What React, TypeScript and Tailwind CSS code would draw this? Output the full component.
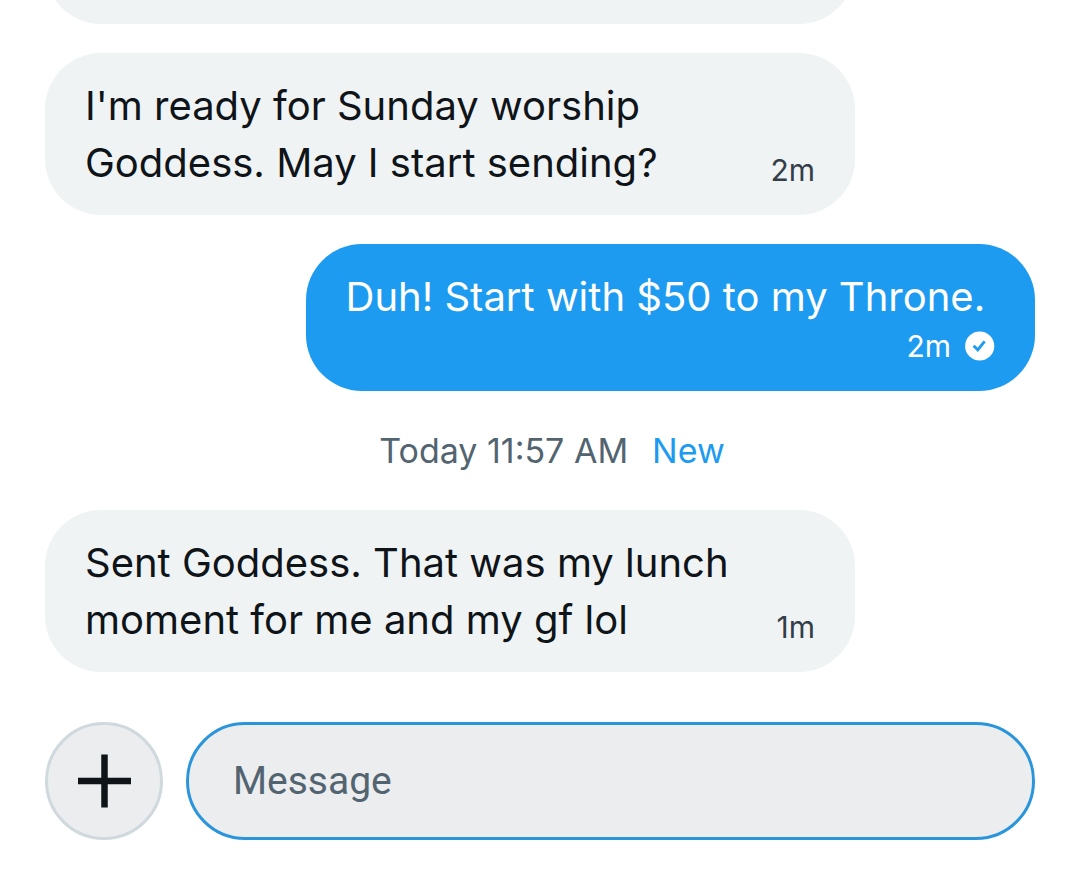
import { useState } from 'react';
import type { FormEvent } from 'react';

type Message = {
  id: number;
  text: string;
  time: string;
  sent?: boolean;
};

const earlier: Message[] = [
  { id: 1, text: "I'm ready for Sunday worship Goddess. May I start sending?", time: '2m' },
  { id: 2, text: 'Duh! Start with $50 to my Throne.', time: '2m', sent: true },
];

const latest: Message[] = [
  { id: 3, text: 'Sent Goddess. That was my lunch moment for me and my gf lol', time: '1m' },
];

function CheckBadge() {
  return (
    <svg className="size-[30px]" viewBox="0 0 30 30" fill="none" aria-hidden="true">
      <circle cx="14.7" cy="15" r="14.6" fill="white" />
      <path d="M8.6 14.8l4.2 4 6.8-8.4" stroke="#1d9bf0" strokeWidth="2.9" />
    </svg>
  );
}

function Bubble({ message }: { message: Message }) {
  if (message.sent) {
    return (
      <li className="max-w-9/11 min-w-14/19 self-end rounded-[56px] bg-[#1d9bf0] px-10 py-6 text-white">
        <p className="text-[40px] leading-[57px]">{message.text}</p>
        <div className="flex h-[42px] items-center justify-end gap-3.5">
          <time className="text-[30px] leading-[42px]">{message.time}</time>
          <CheckBadge />
        </div>
      </li>
    );
  }

  return (
    <li className="flex w-9/11 items-end justify-between gap-10 rounded-[56px] bg-[#eff3f4] px-10 py-6">
      <p className="text-[40px] leading-[57px] text-[#0f1419]">{message.text}</p>
      <time className="text-[30px] leading-[42px] text-[#333e48]">{message.time}</time>
    </li>
  );
}

export default function App() {
  const [draft, setDraft] = useState('');

  const handleSubmit = (e: FormEvent) => {
    e.preventDefault();
    setDraft('');
  };

  return (
    <main className="min-h-screen overflow-hidden bg-white px-[45px] pb-[45px] font-['Inter',sans-serif]">
      {/* tail of the message scrolled off the top */}
      <div className="h-6 w-9/11 overflow-hidden">
        <div className="-mt-[138px] h-[162px] rounded-[56px] bg-[#eff3f4]" />
      </div>

      <ul className="mt-[29px] flex flex-col gap-[29px]">
        {earlier.map((message) => (
          <Bubble key={message.id} message={message} />
        ))}
      </ul>

      <div className="flex h-[119px] items-center justify-center gap-6 pl-6 text-[34px] leading-[42px]">
        <span className="text-[#536471]">Today 11:57 AM</span>
        <span className="text-[#1d9bf0]">New</span>
      </div>

      <ul className="flex flex-col gap-[29px]">
        {latest.map((message) => (
          <Bubble key={message.id} message={message} />
        ))}
      </ul>

      <form onSubmit={handleSubmit} className="mt-[50px] flex items-center gap-[23px]">
        <button
          type="button"
          aria-label="Add attachment"
          className="flex size-[118px] shrink-0 items-center justify-center rounded-full border-3 border-[#cfd9de] bg-[#ebedef]"
        >
          <svg className="size-[54px]" viewBox="0 0 54 54" aria-hidden="true">
            <path d="M27.5 0.5v53M1 27h53" stroke="#0f1419" strokeWidth="6.5" />
          </svg>
        </button>
        <input
          type="text"
          aria-label="Message"
          placeholder="Message"
          value={draft}
          onChange={(e) => setDraft(e.target.value)}
          className="h-[118px] min-w-0 flex-1 rounded-full border-3 border-[#2b95dc] bg-[#ebedef] px-11 font-['Roboto',sans-serif] text-[39px] text-[#0f1419] outline-none placeholder:text-[#536471]"
        />
      </form>
    </main>
  );
}
